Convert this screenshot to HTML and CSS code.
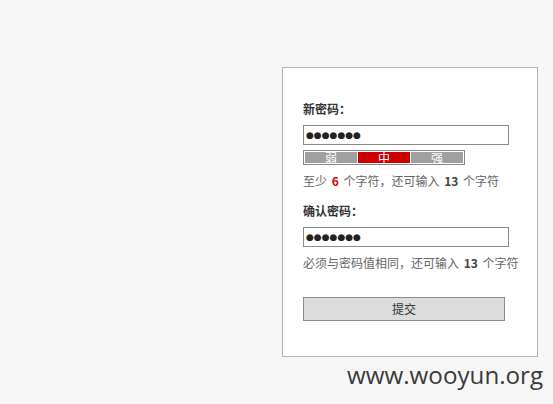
FILE: index.html
```html
<!DOCTYPE html>
<html lang="zh-CN">
<head>
<meta charset="utf-8">
<title>修改密码</title>
<link rel="stylesheet" href="styles.css">
</head>
<body>
<div class="page">
  <form class="panel">
    <div class="label">新密码：</div>
    <div class="field">●●●●●●●</div>
    <div class="strength">
      <span class="seg">弱</span>
      <span class="seg on">中</span>
      <span class="seg">强</span>
    </div>
    <div class="hint">至少 <b class="red">6</b> 个字符，还可输入 <b>13</b> 个字符</div>
    <div class="label second">确认密码：</div>
    <div class="field">●●●●●●●</div>
    <div class="hint">必须与密码值相同，还可输入 <b>13</b> 个字符</div>
    <div class="btn">提交</div>
  </form>
  <div class="mark">www.wooyun.org</div>
</div>
</body>
</html>
```

FILE: styles.css
```css
html, body {
  margin: 0;
  padding: 0;
  background: #f7f7f7;
}
body {
  font-family: "Noto Sans CJK SC", "Noto Sans", sans-serif;
  font-size: 12px;
  color: #555;
}
.page {
  padding-top: 67px;
  padding-left: 282px;
}
.panel {
  box-sizing: border-box;
  width: 256px;
  height: 290px;
  background: #fff;
  border: 1px solid #b4b4b4;
  padding: 32px 0 0 20px;
  display: flex;
  flex-direction: column;
  align-items: flex-start;
}
.label {
  line-height: 18px;
  height: 18px;
  font-weight: bold;
  color: #333;
}
.label.second {
  margin-top: 12px;
}
.field {
  box-sizing: border-box;
  margin-top: 7px;
  width: 206px;
  height: 20px;
  border: 1px solid #8d8d8d;
  background: #fff;
  color: #222;
  font-family: "DejaVu Sans", sans-serif;
  font-size: 9px;
  line-height: 18px;
  padding-left: 2px;
}
.strength {
  margin-top: 5px;
  box-sizing: border-box;
  width: 162px;
  height: 15px;
  border: 1px solid #8a8a8a;
  padding: 1px;
  display: flex;
  gap: 1px;
  background: #fff;
}
.seg {
  flex: 1;
  background: #a0a0a0;
  color: #fff;
  text-align: center;
  font-size: 12px;
  line-height: 11px;
}
.seg.on {
  background: #cc0000;
}
.hint {
  margin-top: 7px;
  line-height: 18px;
  height: 18px;
  color: #666;
}
.hint b {
  color: #444;
  margin: 0 2px;
}
.hint b.red {
  color: #cc0000;
}
.btn {
  margin-top: 25px;
  box-sizing: border-box;
  width: 202px;
  height: 24px;
  border: 1px solid #8d8d8d;
  background: #dcdcdc;
  color: #333;
  text-align: center;
  line-height: 22px;
}
.mark {
  margin-left: 65px;
  margin-top: 2px;
  font-family: "Open Sans", sans-serif;
  font-size: 24.2px;
  line-height: 32px;
  color: #3a3a3a;
}
```
